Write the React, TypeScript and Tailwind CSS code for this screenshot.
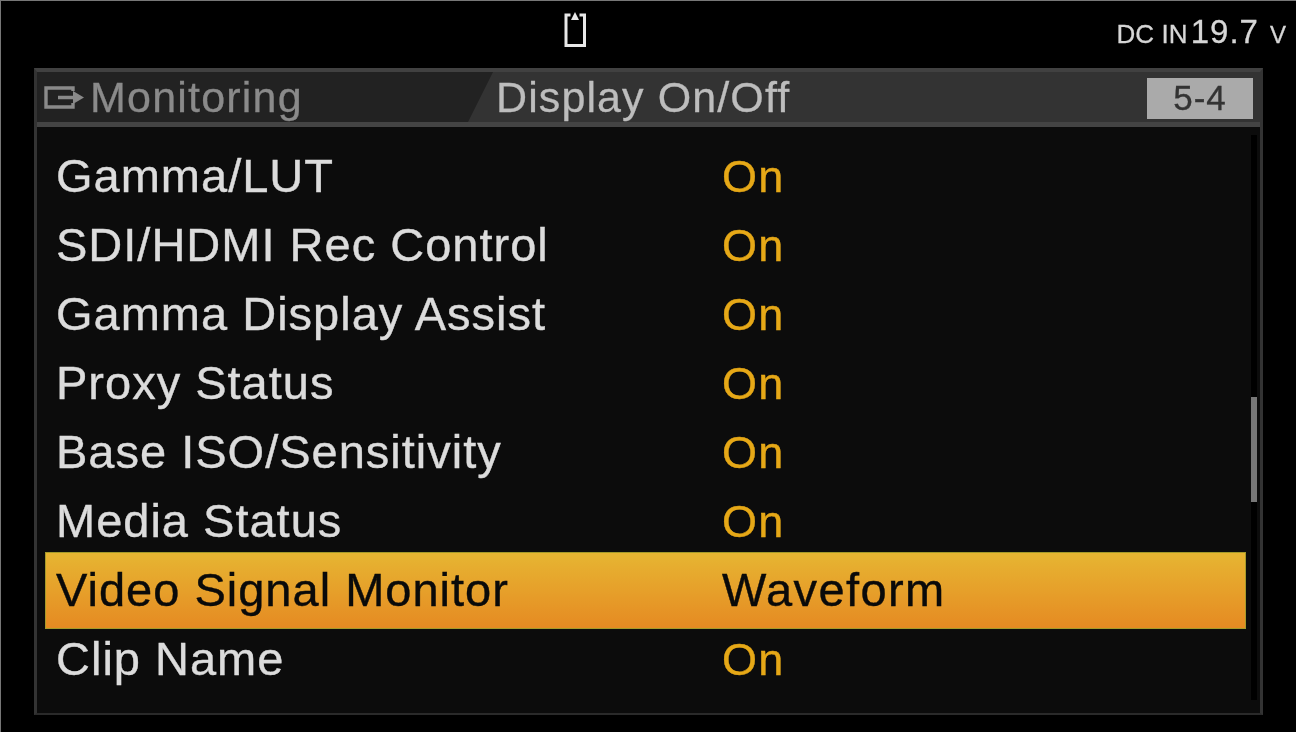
const rows = [
  { label: "Gamma/LUT", value: "On" },
  { label: "SDI/HDMI Rec Control", value: "On" },
  { label: "Gamma Display Assist", value: "On" },
  { label: "Proxy Status", value: "On" },
  { label: "Base ISO/Sensitivity", value: "On" },
  { label: "Media Status", value: "On" },
  { label: "Video Signal Monitor", value: "Waveform", selected: true },
  { label: "Clip Name", value: "On" },
];

function MediaIcon() {
  return (
    <svg width="24" height="37" viewBox="0 0 24 37" fill="none" aria-hidden>
      <path d="M7.500 4H3V34.500H21.500V4H16.500" stroke="#e8e8e8" strokeWidth="3" />
      <path d="M12 1L16 9H8Z" fill="#e8e8e8" />
    </svg>
  );
}

function OutputIcon() {
  return (
    <svg width="42" height="24" viewBox="0 0 42 24" fill="none" aria-hidden>
      <path d="M30 6V3H3V22H30V18" stroke="#8a8a8a" strokeWidth="3.400" />
      <path d="M15 12.500H32" stroke="#8a8a8a" strokeWidth="3.400" />
      <path d="M30 6L41 12.500L30 19Z" fill="#8a8a8a" />
    </svg>
  );
}

export default function App() {
  return (
    <div className="flex h-[732px] w-[1296px] flex-col overflow-hidden border-l border-t border-[#777] bg-black font-['Liberation_Sans',sans-serif] blur-[0.4px]">
      <div className="flex h-[67px] shrink-0 items-start justify-between pl-[562px] pr-[10px] pt-[10px]">
        <MediaIcon />
        <div className="-mt-[4px] flex items-baseline text-[#d6d6d6] [-webkit-text-stroke:0.3px]">
          <span className="text-[26px] tracking-[0.1px]">DC IN</span>
          <span className="ml-[3px] text-[33px] tracking-[1px]">19.7</span>
          <span className="ml-[11px] text-[24px]">V</span>
        </div>
      </div>

      <div className="ml-[33px] flex h-[647px] w-[1229px] flex-col border-x-[3px] border-b-[2px] border-t-[4px] border-x-[#333] border-b-[#2a2a2a] border-t-[#414141] bg-[#0c0c0c]">
        <div className="relative flex h-[55px] shrink-0 items-center border-b-[5px] border-[#444] bg-[#333]">
          <div className="flex h-full w-[456px] items-center bg-[#222] pl-[6px] [clip-path:polygon(0_0,100%_0,431px_100%,0_100%)]">
            <OutputIcon />
            <span className="ml-[5px] text-[43px] tracking-[1.2px] text-[#8a8a8a] [-webkit-text-stroke:0.3px]">Monitoring</span>
          </div>
          <span className="ml-[3px] text-[43px] tracking-[1.1px] text-[#bdbdbd] [-webkit-text-stroke:0.3px]">Display On/Off</span>
          <span className="absolute right-[7px] top-[6px] flex h-[41px] w-[106px] items-center justify-center bg-[#aaa] text-[35px] tracking-[1px] text-[#333] [-webkit-text-stroke:0.3px]">
            5-4
          </span>
        </div>

        <div className="flex min-h-0 flex-1">
          <div className="flex-1 pl-[8px] pr-[5px] pt-[15px]">
            {rows.map((row) => (
              <div
                key={row.label}
                className={
                  row.selected
                    ? "-my-[4px] flex h-[77px] items-center border border-[#a59a2a] bg-gradient-to-b from-[#e6b532] to-[#e58a22] pl-[10px] text-[47px] tracking-[1px] text-[#0a0a0a] [-webkit-text-stroke:0.4px]"
                    : "flex h-[69px] items-center border border-transparent pl-[10px] text-[47px] tracking-[1px] text-[#dcdcdc] [-webkit-text-stroke:0.4px]"
                }
              >
                <span className="w-[666px] shrink-0">{row.label}</span>
                <span className={row.selected ? "text-[#0a0a0a] tracking-[1.400px]" : "text-[45px] tracking-[1.200px] text-[#e6a817]"}>{row.value}</span>
              </div>
            ))}
          </div>
          <div className="mb-[13px] mr-[3px] mt-[8px] w-[6px] shrink-0 bg-black">
            <div className="mt-[262px] h-[105px] w-full bg-[#777]" />
          </div>
        </div>
      </div>
    </div>
  );
}
